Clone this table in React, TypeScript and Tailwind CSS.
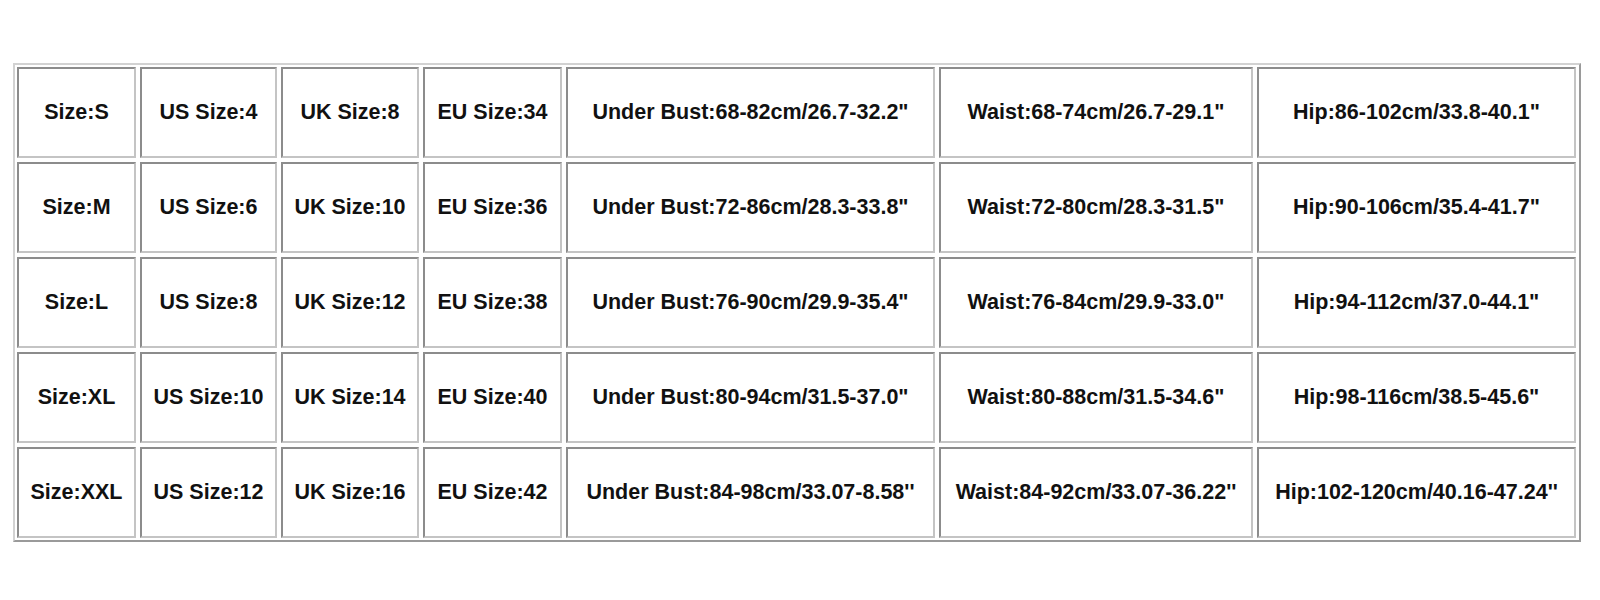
import React from "react";

const rows: string[][] = [
  ["Size:S", "US Size:4", "UK Size:8", "EU Size:34", 'Under Bust:68-82cm/26.7-32.2"', 'Waist:68-74cm/26.7-29.1"', 'Hip:86-102cm/33.8-40.1"'],
  ["Size:M", "US Size:6", "UK Size:10", "EU Size:36", 'Under Bust:72-86cm/28.3-33.8"', 'Waist:72-80cm/28.3-31.5"', 'Hip:90-106cm/35.4-41.7"'],
  ["Size:L", "US Size:8", "UK Size:12", "EU Size:38", 'Under Bust:76-90cm/29.9-35.4"', 'Waist:76-84cm/29.9-33.0"', 'Hip:94-112cm/37.0-44.1"'],
  ["Size:XL", "US Size:10", "UK Size:14", "EU Size:40", 'Under Bust:80-94cm/31.5-37.0"', 'Waist:80-88cm/31.5-34.6"', 'Hip:98-116cm/38.5-45.6"'],
  ["Size:XXL", "US Size:12", "UK Size:16", "EU Size:42", "Under Bust:84-98cm/33.07-8.58''", "Waist:84-92cm/33.07-36.22''", "Hip:102-120cm/40.16-47.24''"],
];

export default function App() {
  return (
    <div className="w-[1600px] h-[600px] bg-white overflow-hidden" style={{ fontFamily: '"Liberation Sans", Arial, sans-serif' }}>
      <div className="ml-[13px] mt-[63px] w-[1568px] border-2 border-t-[#d2d2d2] border-l-[#d2d2d2] border-r-[#9a9a9a] border-b-[#9a9a9a] p-[2px]">
        <div className="grid grid-cols-[119px_137px_138px_139px_369px_314px_319px] auto-rows-[91px] gap-[4px]">
          {rows.map((r, i) =>
            r.map((c, j) => (
              <div
                key={`${i}-${j}`}
                className="flex items-center justify-center bg-white border-2 border-t-[#8c8c8c] border-l-[#8c8c8c] border-r-[#c4c4c4] border-b-[#c4c4c4] text-[21.5px] font-bold text-[#111] whitespace-nowrap"
              >
                {c}
              </div>
            ))
          )}
        </div>
      </div>
    </div>
  );
}
